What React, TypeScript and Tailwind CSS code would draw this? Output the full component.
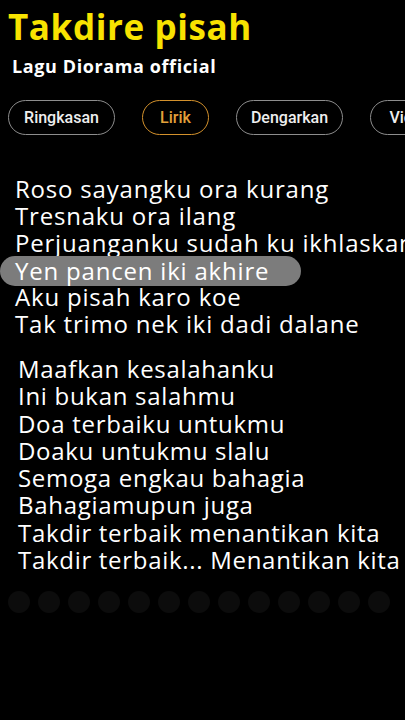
import React from "react";

const tabs = [
  { id: "ringkasan", label: "Ringkasan", w: "w-[107px]" },
  { id: "lirik", label: "Lirik", w: "w-[67px]" },
  { id: "dengarkan", label: "Dengarkan", w: "w-[107px]" },
  { id: "video", label: "Video", w: "w-[80px]" },
];

const verse1 = [
  "Roso sayangku ora kurang",
  "Tresnaku ora ilang",
  "Perjuanganku sudah ku ikhlaskan",
  "Yen pancen iki akhire",
  "Aku pisah karo koe",
  "Tak trimo nek iki dadi dalane",
];

const verse2 = [
  "Maafkan kesalahanku",
  "Ini bukan salahmu",
  "Doa terbaiku untukmu",
  "Doaku untukmu slalu",
  "Semoga engkau bahagia",
  "Bahagiamupun juga",
  "Takdir terbaik menantikan kita",
  "Takdir terbaik... Menantikan kita",
];

const ACTIVE_LINE = 3;

export default function App() {
  return (
    <div className="h-[720px] w-[405px] overflow-hidden bg-black text-white">
      {/* Judul */}
      <div className="px-2 pt-[2px]">
        <h1 className="font-['Open_Sans',sans-serif] text-[35px] font-bold leading-[50px] tracking-[0.6px] text-[#f8e300]">
          Takdire pisah
        </h1>
        <p className="mt-[3px] pl-1 font-['Open_Sans',sans-serif] text-[18px] font-bold leading-[23px] tracking-[0.6px] text-white">
          Lagu Diorama official
        </p>
      </div>

      {/* Tab */}
      <div className="mt-[22px] flex gap-[27px] whitespace-nowrap pl-2">
        {tabs.map((tab) => {
          const active = tab.id === "lirik";
          return (
            <div
              key={tab.id}
              className={
                "flex h-[35px] shrink-0 items-center justify-center rounded-full border-[1.5px] font-['Roboto',sans-serif] text-[16px] font-medium " +
                tab.w +
                (active
                  ? " border-[#d3912c] text-[#e3a13a]"
                  : " border-[#8d8d8d] text-[#eeeeee]")
              }
            >
              {tab.label}
            </div>
          );
        })}
      </div>

      {/* Lirik */}
      <div className="mt-[40px] whitespace-nowrap font-['Open_Sans',sans-serif] text-[24px] font-medium leading-[27px] tracking-[0.8px]">
        {verse1.map((line, i) => (
          <div key={line} className="flex">
            <span
              className={
                i === ACTIVE_LINE
                  ? "-my-[1.5px] translate-y-[1px] rounded-full bg-[#7c7c7c] pl-[15px] pr-[32px] leading-[30px]"
                  : "pl-[15px]"
              }
            >
              {line}
            </span>
          </div>
        ))}
      </div>

      <div className="mt-[18px] whitespace-nowrap pl-[18px] font-['Open_Sans',sans-serif] text-[24px] font-medium leading-[27.3px] tracking-[0.7px]">
        {verse2.map((line) => (
          <div key={line}>{line}</div>
        ))}
      </div>

      {/* Latar bokeh */}
      <div className="mt-[18px] flex gap-[8px] pl-[8px]">
        {[0, 1, 2, 3, 4, 5, 6, 7, 8, 9, 10, 11, 12].map((n) => (
          <div key={n} className="h-[22px] w-[22px] shrink-0 rounded-full bg-[#0c0c0c]" />
        ))}
      </div>
    </div>
  );
}
